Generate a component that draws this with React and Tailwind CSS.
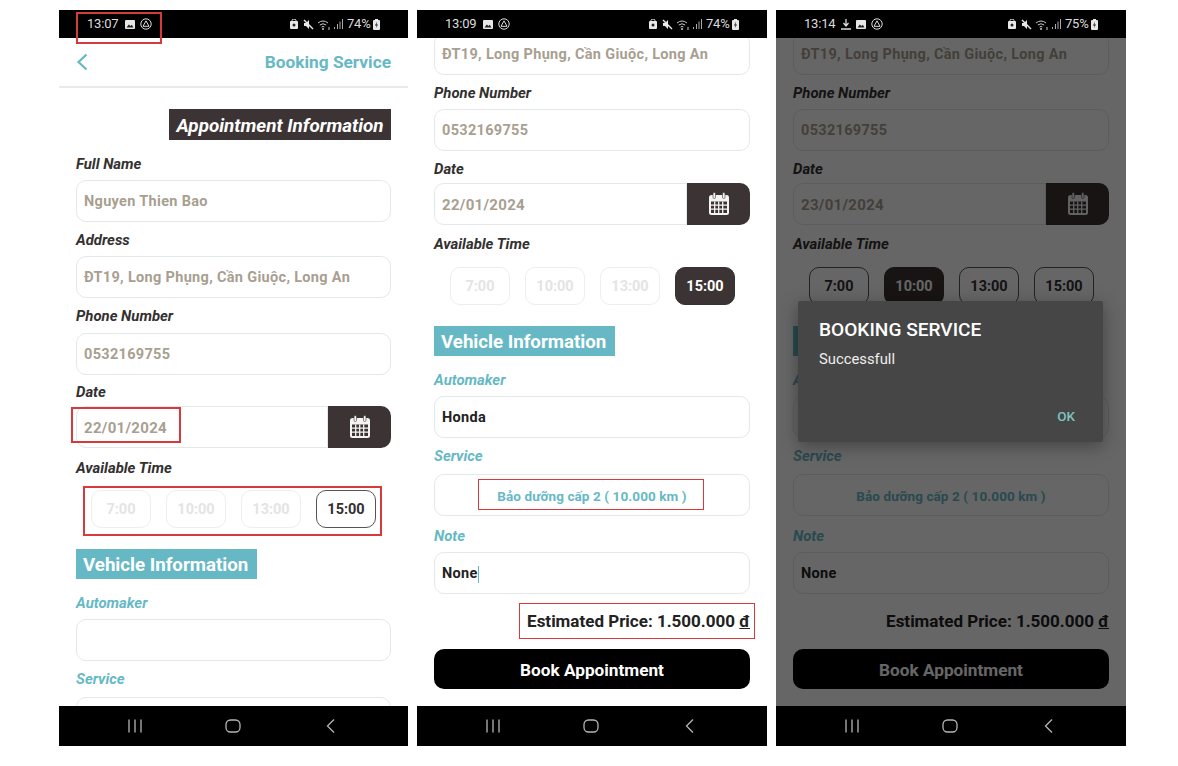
import React from "react";

const StatusBar = ({ time, battery, download }) => (
  <div className="h-[28px] shrink-0 bg-black flex items-center justify-between pl-[28px] pr-[28px] text-[#dcdcdc] text-[12.5px] font-['Roboto',sans-serif]">
    <div className="flex items-center">
      <span className="text-[13px] tracking-[-0.2px]">{time}</span>
      {download && (
        <svg width="10" height="11" viewBox="0 0 10 11" className="ml-[6px]">
          <path d="M5 0v6M2.500 4 5 7l2.500-3M0 10h10" fill="none" stroke="#dcdcdc" strokeWidth="1.300" />
        </svg>
      )}
      <svg width="10" height="9" viewBox="0 0 10 9" className={download ? "ml-[5px]" : "ml-[7px]"}>
        <rect width="10" height="9" rx="1" fill="#e8e8e8" />
        <path d="M1.500 7.500 3.800 4.500 5.500 6 6.800 4.800 8.500 7.500Z" fill="#222" />
      </svg>
      <svg width="12" height="12" viewBox="0 0 12 12" className="ml-[5px]">
        <circle cx="6" cy="6" r="5.200" fill="none" stroke="#dcdcdc" strokeWidth="1" />
        <path d="M6 2.800 9 8.300H3Z" fill="none" stroke="#dcdcdc" strokeWidth="1" />
      </svg>
    </div>
    <div className="flex items-center">
      <svg width="8" height="10" viewBox="0 0 8 10">
        <rect y="2" width="8" height="8" rx="1" fill="#e8e8e8" />
        <path d="M2 2V1.500a2 1.500 0 0 1 4 0V2" fill="none" stroke="#e8e8e8" />
        <circle cx="4" cy="6" r="1.500" fill="#222" />
      </svg>
      <svg width="11" height="11" viewBox="0 0 11 11" className="ml-[5px]">
        <path d="M1 4h2l3-3v9L3 7H1Z" fill="#e8e8e8" />
        <path d="M1 1l9 9" stroke="#e8e8e8" strokeWidth="1.400" />
      </svg>
      <svg width="14" height="11" viewBox="0 0 14 11" className="ml-[3px]">
        <path d="M1 4a8 8 0 0 1 10 0M2.800 6a5.200 5.200 0 0 1 6.400 0M4.600 8a2.500 2.500 0 0 1 2.800 0" fill="none" stroke="#c8c8c8" strokeWidth="1" />
        <circle cx="6" cy="10" r="1" fill="#c8c8c8" />
        <path d="M12 8v3" stroke="#c8c8c8" />
      </svg>
      <svg width="9" height="10" viewBox="0 0 9 10" className="ml-[3px]">
        <path d="M.5 8v2M3.500 5v5M6 2.500V10M8.500 0v10" stroke="#bdbdbd" strokeWidth=".9" />
      </svg>
      <span className="ml-[4px] w-[25px] text-[13px] tracking-[-0.2px]">{battery}</span>
      <svg width="7" height="11" viewBox="0 0 7 11" className="ml-[1px]">
        <rect y="1" width="7" height="10" rx="1" fill="#e8e8e8" />
        <rect x="2" width="3" height="1" fill="#e8e8e8" />
        <path d="M4 2.500 2 6.500h1.500L3 9l2-3.500H3.500Z" fill="#222" />
      </svg>
    </div>
  </div>
);

const NavBar = () => (
  <div className="h-[40px] shrink-0 bg-black flex items-center pr-[2px]">
    <div className="w-[294px] mx-auto grid grid-cols-3 justify-items-center">
      <svg width="14" height="14" viewBox="0 0 14 14">
        <path d="M1 .500v13M7 .500v13M13 .500v13" stroke="#b5b5b5" strokeWidth="1.300" />
      </svg>
      <svg width="16" height="14" viewBox="0 0 16 14">
        <rect x="1" y="1" width="14" height="12" rx="4.500" fill="none" stroke="#b5b5b5" strokeWidth="1.300" />
      </svg>
      <svg width="9" height="14" viewBox="0 0 9 14">
        <path d="M8 .500 1.500 7 8 13.500" fill="none" stroke="#b5b5b5" strokeWidth="1.300" />
      </svg>
    </div>
  </div>
);

const Label = ({ children, teal, className = "" }) => (
  <div className={`h-[20px] leading-[20px] text-[14.9px] font-bold italic whitespace-nowrap ${teal ? "text-[#66b9c4]" : "text-[#333030]"} ${className}`}>
    {children}
  </div>
);

const Input = ({ children, dark, className = "" }) => (
  <div className={`h-[42px] rounded-[10px] border border-[#e3e9e9] bg-white flex items-center pl-[7px] pr-[7px] pt-[2px] text-[14.5px] font-bold tracking-[0.32px] whitespace-nowrap ${dark ? "text-[#222]" : "text-[#a89f91]"} ${className}`}>
    {children}
  </div>
);

const CalendarIcon = () => (
  <svg width="22" height="24" viewBox="0 0 22 24">
    <rect x="1" y="3" width="20" height="20" rx="2.500" fill="#f4f4f4" />
    <rect x="5" y="0.500" width="2.500" height="6" rx="1.200" fill="#f4f4f4" stroke="#3c3434" strokeWidth=".6" />
    <rect x="14.500" y="0.500" width="2.500" height="6" rx="1.200" fill="#f4f4f4" stroke="#3c3434" strokeWidth=".6" />
    <path d="M3 9.500h16v11.500H3Z" fill="#3c3434" />
    <path d="M6.700 9.500v11.500M10.700 9.500v11.500M14.700 9.500v11.500M3 13.200h16M3 17.200h16" stroke="#f4f4f4" strokeWidth="1.300" />
  </svg>
);

const DateInput = ({ value, className = "" }) => (
  <div className={`h-[42px] flex ${className}`}>
    <div className="flex-1 rounded-l-[10px] border border-[#e3e9e9] bg-white flex items-center pl-[7px] pt-[2px] text-[15px] font-bold tracking-[0.3px] text-[#a89f91]">
      {value}
    </div>
    <div className="w-[63px] rounded-r-[10px] bg-[#3c3434] flex items-center justify-center">
      <CalendarIcon />
    </div>
  </div>
);

const TimeRow = ({ selected, disabled, selectedDark, className = "" }) => (
  <div className={`flex gap-[15px] ${className}`}>
    {["7:00", "10:00", "13:00", "15:00"].map((t) => {
      const on = t === selected;
      let look = "border-[#555] text-[#333030] bg-white";
      if (on && selectedDark) look = "border-[#333] bg-[#3c3434] text-white";
      if (!on && disabled) look = "border-[#eeeeee] text-[#e4e4e4] bg-white";
      return (
        <div key={t} className={`w-[60px] h-[38px] rounded-[10px] border flex items-center justify-center pt-[2px] text-[14.5px] font-bold ${look}`}>
          {t}
        </div>
      );
    })}
  </div>
);

const VehicleTitle = ({ className = "" }) => (
  <div className={`w-[181px] h-[30px] bg-[#66b9c4] text-white text-[18.7px] font-bold leading-[33px] pl-[7px] whitespace-nowrap ${className}`}>
    Vehicle Information
  </div>
);

const RedBox = ({ className = "" }) => (
  <div className={`absolute border-2 border-[#d8393b] pointer-events-none ${className}`} />
);

// first phone, top of the form
const FirstScreen = () => (
  <div className="relative w-[349px] h-[736px] flex flex-col">
    <StatusBar time="13:07" battery="74%" />
    <div className="flex-1 overflow-hidden bg-white">
      <div className="h-[50px] border-b-2 border-[#e9e9e9] flex items-center justify-between pl-[17px] pr-[17px]">
        <svg width="12" height="18" viewBox="0 0 12 18">
          <path d="M10.500 1.500 2.500 9l8 7.500" fill="none" stroke="#66b9c4" strokeWidth="2.200" />
        </svg>
        <span className="pt-[2px] text-[17.300px] font-bold text-[#66b9c4]">Booking Service</span>
      </div>
      <div className="px-[17px] pt-[21px]">
        <div className="flex justify-end">
          <div className="w-[222px] h-[31px] bg-[#3c3434] text-white italic font-bold text-[18.850px] leading-[34px] text-center whitespace-nowrap">
            Appointment Information
          </div>
        </div>
        <Label className="mt-[14px]">Full Name</Label>
        <Input className="mt-[6px]">Nguyen Thien Bao</Input>
        <Label className="mt-[8px]">Address</Label>
        <Input className="mt-[6px]">ĐT19, Long Phụng, Cần Giuộc, Long An</Input>
        <Label className="mt-[8px]">Phone Number</Label>
        <Input className="mt-[7px]">0532169755</Input>
        <Label className="mt-[7px]">Date</Label>
        <DateInput value="22/01/2024" className="mt-[4px]" />
        <Label className="mt-[10px]">Available Time</Label>
        <TimeRow selected="15:00" disabled className="mt-[12px] ml-[15px]" />
        <VehicleTitle className="mt-[21px]" />
        <Label teal className="mt-[14px]">Automaker</Label>
        <Input dark className="mt-[6px]" />
        <Label teal className="mt-[8px]">Service</Label>
        <Input dark className="mt-[8px]" />
      </div>
    </div>
    <NavBar />
    <RedBox className="left-[17px] top-[2px] w-[86px] h-[32px]" />
    <RedBox className="left-[12px] top-[397px] w-[110px] h-[36px]" />
    <RedBox className="left-[24px] top-[476px] w-[299px] h-[50px]" />
  </div>
);

// second and third phone share the scrolled form
const ScrolledForm = ({ date, selected, disabled, selectedDark, cursor }) => (
  <div className="px-[17px] -mt-[5px]">
    <Input>ĐT19, Long Phụng, Cần Giuộc, Long An</Input>
    <Label className="mt-[8px]">Phone Number</Label>
    <Input className="mt-[6px]">0532169755</Input>
    <Label className="mt-[8px]">Date</Label>
    <DateInput value={date} className="mt-[4px]" />
    <Label className="mt-[9px]">Available Time</Label>
    <TimeRow selected={selected} disabled={disabled} selectedDark={selectedDark} className="mt-[13px] ml-[16px]" />
    <VehicleTitle className="mt-[21px]" />
    <Label teal className="mt-[14px]">Automaker</Label>
    <Input dark className="mt-[6px]">Honda</Input>
    <Label teal className="mt-[8px]">Service</Label>
    <Input className="mt-[8px] justify-center !text-[#66b9c4] !text-[13.5px] !tracking-[0.1px]">Bảo dưỡng cấp 2 ( 10.000 km )</Input>
    <Label teal className="mt-[10px]">Note</Label>
    <Input dark className="mt-[6px]">
      None
      {cursor && <span className="inline-block w-px h-[17px] bg-[#66b9c4]" />}
    </Input>
    <div className="mt-[17px] h-[20px] leading-[20px] text-right text-[17px] font-bold text-[#222] whitespace-nowrap">
      Estimated Price: 1.500.000 <span className="underline">đ</span>
    </div>
    <div className="mt-[18px] h-[40px] rounded-[10px] bg-black text-white text-[17.2px] font-bold flex items-center justify-center pt-[3px]">
      Book Appointment
    </div>
  </div>
);

const SecondScreen = () => (
  <div className="relative w-[350px] h-[736px] flex flex-col">
    <StatusBar time="13:09" battery="74%" />
    <div className="flex-1 overflow-hidden bg-white">
      <ScrolledForm date="22/01/2024" selected="15:00" disabled selectedDark cursor />
    </div>
    <NavBar />
    <RedBox className="left-[61px] top-[469px] w-[226px] h-[31px] !border-[1.500px]" />
    <RedBox className="left-[102px] top-[593px] w-[236px] h-[36px] !border-[1.500px]" />
  </div>
);

const ThirdScreen = () => (
  <div className="w-[350px] h-[736px] flex flex-col">
    <StatusBar time="13:14" battery="75%" download />
    <div className="relative flex-1 overflow-hidden bg-white">
      <ScrolledForm date="23/01/2024" selected="10:00" selectedDark />
      <div className="absolute inset-0 bg-black/60" />
      <div className="absolute left-[22px] top-[263px] w-[305px] h-[141px] bg-[#464646] rounded-[2px] shadow-[0_4px_18px_rgba(0,0,0,0.35)] pl-[21px] pt-[17px]">
        <div className="text-[19.100px] leading-[24px] font-medium text-white whitespace-nowrap">BOOKING SERVICE</div>
        <div className="mt-[7px] text-[14.800px] leading-[20px] text-[#eeeeee]">Successfull</div>
        <div className="absolute right-[28px] bottom-[17px] text-[13.500px] leading-[18px] font-medium text-[#7fc4bc]">OK</div>
      </div>
    </div>
    <NavBar />
  </div>
);

export default function App() {
  return (
    <div className="w-[1178px] h-[766px] overflow-hidden bg-white flex gap-[9px] pl-[59px] pt-[10px] font-['Roboto',sans-serif]">
      <FirstScreen />
      <SecondScreen />
      <ThirdScreen />
    </div>
  );
}
